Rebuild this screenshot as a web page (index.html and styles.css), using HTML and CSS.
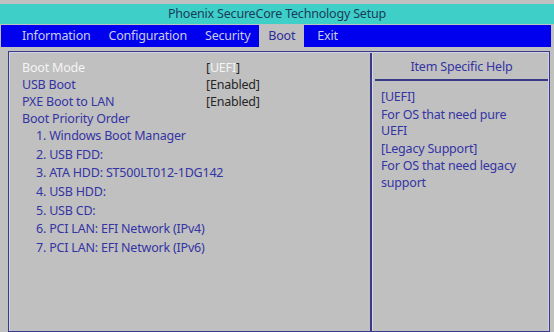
FILE: index.html
```html
<!DOCTYPE html>
<html lang="en">
<head>
  <meta charset="UTF-8" />
  <title>Phoenix SecureCore Technology Setup</title>
  <link rel="stylesheet" href="styles.css">
</head>
<body>
  <div class="title">Phoenix SecureCore Technology Setup</div>

  <!-- top menu -->
  <div class="menu">
    <span class="tab">Information</span>
    <span class="tab">Configuration</span>
    <span class="tab">Security</span>
    <span class="tab active">Boot</span>
    <span class="tab">Exit</span>
  </div>

  <div class="frame">
    <div class="settings">
      <div class="row">
        <span class="label selected">Boot Mode</span>
        <span class="value">[<span class="hl">UEFI</span>]</span>
      </div>
      <div class="row">
        <span class="label">USB Boot</span>
        <span class="value">[Enabled]</span>
      </div>
      <div class="row">
        <span class="label">PXE Boot to LAN</span>
        <span class="value">[Enabled]</span>
      </div>
      <div class="row">
        <span class="label">Boot Priority Order</span>
      </div>
      <ul class="order">
        <li>1. Windows Boot Manager</li>
        <li>2. USB FDD:</li>
        <li>3. ATA HDD: ST500LT012-1DG142</li>
        <li>4. USB HDD:</li>
        <li>5. USB CD:</li>
        <li>6. PCI LAN: EFI Network (IPv4)</li>
        <li>7. PCI LAN: EFI Network (IPv6)</li>
      </ul>
    </div>

    <div class="help">
      <div class="help-title">Item Specific Help</div>
      <div class="help-body">
        <p>[UEFI]</p>
        <p>For OS that need pure UEFI</p>
        <p>[Legacy Support]</p>
        <p>For OS that need legacy support</p>
      </div>
    </div>
  </div>
</body>
</html>
```

FILE: styles.css
```css
html, body {
  height: 100%;
}
body {
  margin: 0;
  padding-top: 4px;
  box-sizing: border-box;
  background: #c0c0c0;
  font-family: "Noto Sans", sans-serif;
  font-size: 12.5px;
  letter-spacing: -0.2px;
  display: flex;
  flex-direction: column;
  overflow: hidden;
}
.title {
  height: 20px;
  line-height: 20px;
  background: #3ecfc8;
  color: #1c3c5c;
  text-align: center;
}
.menu {
  height: 22px;
  margin: 1px 3px 0 1px;
  background: #0000ee;
  display: flex;
  padding-left: 12px;
}
.tab {
  line-height: 22px;
  padding: 0 9px;
  color: #c8cce8;
}
.active {
  background: #c0c0c0;
  color: #2c2c9c;
  margin-right: 4px;
}
.frame {
  flex: 1;
  margin: 4px 4px 0 8px;
  border: 2px solid #d0d0e0;
  border-bottom: none;
  outline: 1px solid #3a3a8a;
  outline-offset: -1px;
  display: flex;
}
.settings {
  width: 348px;
  padding: 6px 0 0 12px;
  border-right: 2px solid #3a3a8a;
  box-shadow: 1px 0 0 #d8d8e4;
  color: #3434a4;
}
.row {
  display: flex;
  height: 17px;
  line-height: 17px;
}
.label {
  width: 184px;
}
.selected {
  color: #f4f4f4;
}
.value {
  color: #262626;
}
.hl {
  color: #f4f4f4;
}
.order {
  list-style: none;
  margin: 0;
  padding-left: 14px;
}
.order li {
  height: 18.7px;
  line-height: 18.7px;
}
.help {
  flex: 1;
  margin-left: 3px;
  color: #3434a4;
}
.help-title {
  text-align: center;
  line-height: 24px;
  padding-top: 2px;
  border-bottom: 2px solid #3a3a8a;
}
.help-body {
  padding: 8px 28px 0 6px;
}
.help-body p {
  margin: 0 0 1px;
  line-height: 16.5px;
}
```
